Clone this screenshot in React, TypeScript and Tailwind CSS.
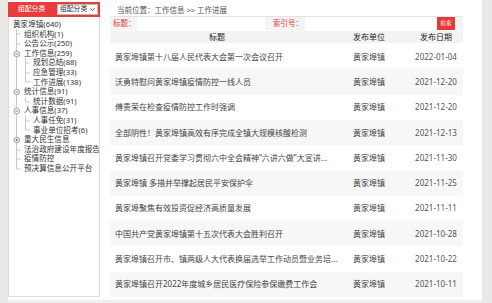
import { ChevronDown } from "lucide-react";

type Pre = "I" | "T" | "L" | "minus" | "plus";

const tree: { label: string; pre: Pre[] }[] = [
  { label: "黄家埠镇(640)", pre: [] },
  { label: "组织机构(1)", pre: ["T"] },
  { label: "公告公示(250)", pre: ["T"] },
  { label: "工作信息(259)", pre: ["minus"] },
  { label: "规划总结(88)", pre: ["I", "T"] },
  { label: "应急管理(33)", pre: ["I", "T"] },
  { label: "工作进展(138)", pre: ["I", "L"] },
  { label: "统计信息(91)", pre: ["minus"] },
  { label: "统计数据(91)", pre: ["I", "L"] },
  { label: "人事信息(37)", pre: ["minus"] },
  { label: "人事任免(31)", pre: ["I", "T"] },
  { label: "事业单位招考(6)", pre: ["I", "L"] },
  { label: "重大民生信息", pre: ["plus"] },
  { label: "法治政府建设年度报告(", pre: ["T"] },
  { label: "疫情防控", pre: ["T"] },
  { label: "预决算信息公开平台", pre: ["L"] },
];

const rows = [
  { title: "黄家埠镇第十八届人民代表大会第一次会议召开", date: "2022-01-04" },
  { title: "沃勇特慰问黄家埠镇疫情防控一线人员", date: "2021-12-20" },
  { title: "傅贵荣在检查疫情防控工作时强调", date: "2021-12-20" },
  { title: "全部阴性！黄家埠镇高效有序完成全镇大规模核酸检测", date: "2021-12-13" },
  { title: "黄家埠镇召开党委学习贯彻六中全会精神“六讲六做”大宣讲...", date: "2021-11-30" },
  { title: "黄家埠镇 多措并举撑起居民平安保护伞", date: "2021-11-25" },
  { title: "黄家埠聚焦有效投资促经济高质量发展", date: "2021-11-11" },
  { title: "中国共产党黄家埠镇第十五次代表大会胜利召开", date: "2021-10-28" },
  { title: "黄家埠镇召开市、镇两级人大代表换届选举工作动员暨业务培...", date: "2021-10-22" },
  { title: "黄家埠镇召开2022年度城乡居民医疗保险参保缴费工作会", date: "2021-10-11" },
];

function Connector({ kind }: { kind: Pre }) {
  const c = "#c9c9c9";
  return (
    <svg width="9" height="10" viewBox="0 0 9 10" className="shrink-0">
      {(kind === "I" || kind === "T" || kind === "minus" || kind === "plus") && (
        <line x1="4.5" y1="0" x2="4.5" y2="10" stroke={c} strokeWidth="1" />
      )}
      {kind === "L" && <line x1="4.5" y1="0" x2="4.5" y2="5" stroke={c} strokeWidth="1" />}
      {(kind === "T" || kind === "L") && (
        <line x1="4.5" y1="5" x2="9" y2="5" stroke={c} strokeWidth="1" />
      )}
      {(kind === "minus" || kind === "plus") && (
        <>
          <circle cx="4.8" cy="5" r="2.8" fill="white" stroke="#8a8a8a" strokeWidth="0.8" />
          <line x1="3.3" y1="5" x2="6.3" y2="5" stroke="#666" strokeWidth="0.8" />
          {kind === "plus" && (
            <line x1="4.8" y1="3.5" x2="4.8" y2="6.5" stroke="#666" strokeWidth="0.8" />
          )}
        </>
      )}
    </svg>
  );
}

export default function App() {
  return (
    <div className="flex h-[303px] w-[492px] overflow-hidden bg-white font-['Noto_Sans','Noto_Sans_CJK_SC',sans-serif] text-[#333]">
      {/* left gutter */}
      <div className="w-[8px] shrink-0 bg-[#eae9e5]" />

      <div className="flex w-[474px] shrink-0 flex-col">
        <div className="flex h-[300px]">
          {/* sidebar */}
          <div className="flex h-[297px] w-[92px] shrink-0 flex-col pt-[2px]">
            <div className="flex h-[15px] items-center bg-[#ea3b3d] pl-[10px] pr-[2px]">
              <span className="text-[6.8px] leading-none text-white">组配分类</span>
              <div className="ml-auto flex h-[11px] w-[41px] items-center justify-between border border-[#bbb] bg-white pl-[2px] pr-[1px]">
                <span className="text-[6.8px] leading-none text-[#333]">组配分类</span>
                <ChevronDown size={7} strokeWidth={3} className="text-[#333]" />
              </div>
            </div>
            <div className="flex flex-1 flex-col overflow-hidden border-x border-b border-[#dcdcdc] pl-[3px] pt-[3px]">
              {tree.map((t) => (
                <div key={t.label} className="flex h-[9.6px] items-center whitespace-nowrap">
                  {t.pre.map((p, i) => (
                    <Connector key={i} kind={p} />
                  ))}
                  <span
                    className={`text-[7.6px] leading-none text-[#333] ${
                      t.pre.length ? "ml-[3px]" : "ml-[1px]"
                    }`}
                  >
                    {t.label}
                  </span>
                </div>
              ))}
            </div>
          </div>

          <div className="w-[10px] shrink-0" />

          {/* main */}
          <div className="flex h-[297px] w-[353px] shrink-0 flex-col overflow-hidden">
            <div className="flex h-[20px] items-center pl-[7px] pt-[4px] text-[7.5px] text-[#555]">
              当前位置：工作信息 &gt;&gt; 工作进展
            </div>

            <div className="flex h-[17px] items-center border-t border-[#e3e3e3] bg-[#f4f4f4] pl-[3px]">
              <span className="w-[24px] text-[7.5px] leading-none text-[#e53935]">标题：</span>
              <div className="h-[13px] w-[128px] bg-white" />
              <span className="ml-[8px] w-[32px] text-[7.5px] leading-none text-[#e53935]">索引号：</span>
              <div className="h-[13px] w-[131px] bg-white" />
              <button className="ml-[1px] flex h-[13px] w-[18px] items-center justify-center bg-[#e5393b] text-[5.5px] leading-none text-white">
                检索
              </button>
            </div>

            <div className="mt-px flex h-[15px] items-center whitespace-nowrap bg-[#f3f3f3] text-[8px] leading-none text-[#222]">
              <div className="w-[214px] shrink-0 text-center">标题</div>
              <div className="w-[90px] shrink-0 text-center">发布单位</div>
              <div className="w-[49px] shrink-0 pr-[5px] text-center">发布日期</div>
            </div>

            <div className="mt-px flex flex-col">
              {rows.map((r, i) => (
                <div
                  key={r.title}
                  className={`flex h-[25.3px] shrink-0 items-center whitespace-nowrap text-[8px] leading-none text-[#444] ${
                    i % 2 === 1 ? "bg-[#f7f7f7]" : "bg-white"
                  }`}
                >
                  <div className="w-[214px] shrink-0 pl-[5px]">{r.title}</div>
                  <div className="w-[90px] shrink-0 text-center">黄家埠镇</div>
                  <div className="w-[49px] shrink-0 pr-[5px] text-center text-[#555]">{r.date}</div>
                </div>
              ))}
            </div>
          </div>
        </div>
        <div className="h-[3px] bg-[#efefef]" />
      </div>

      {/* right gutter */}
      <div className="w-[10px] shrink-0 bg-[#eae9e5]" />
    </div>
  );
}
